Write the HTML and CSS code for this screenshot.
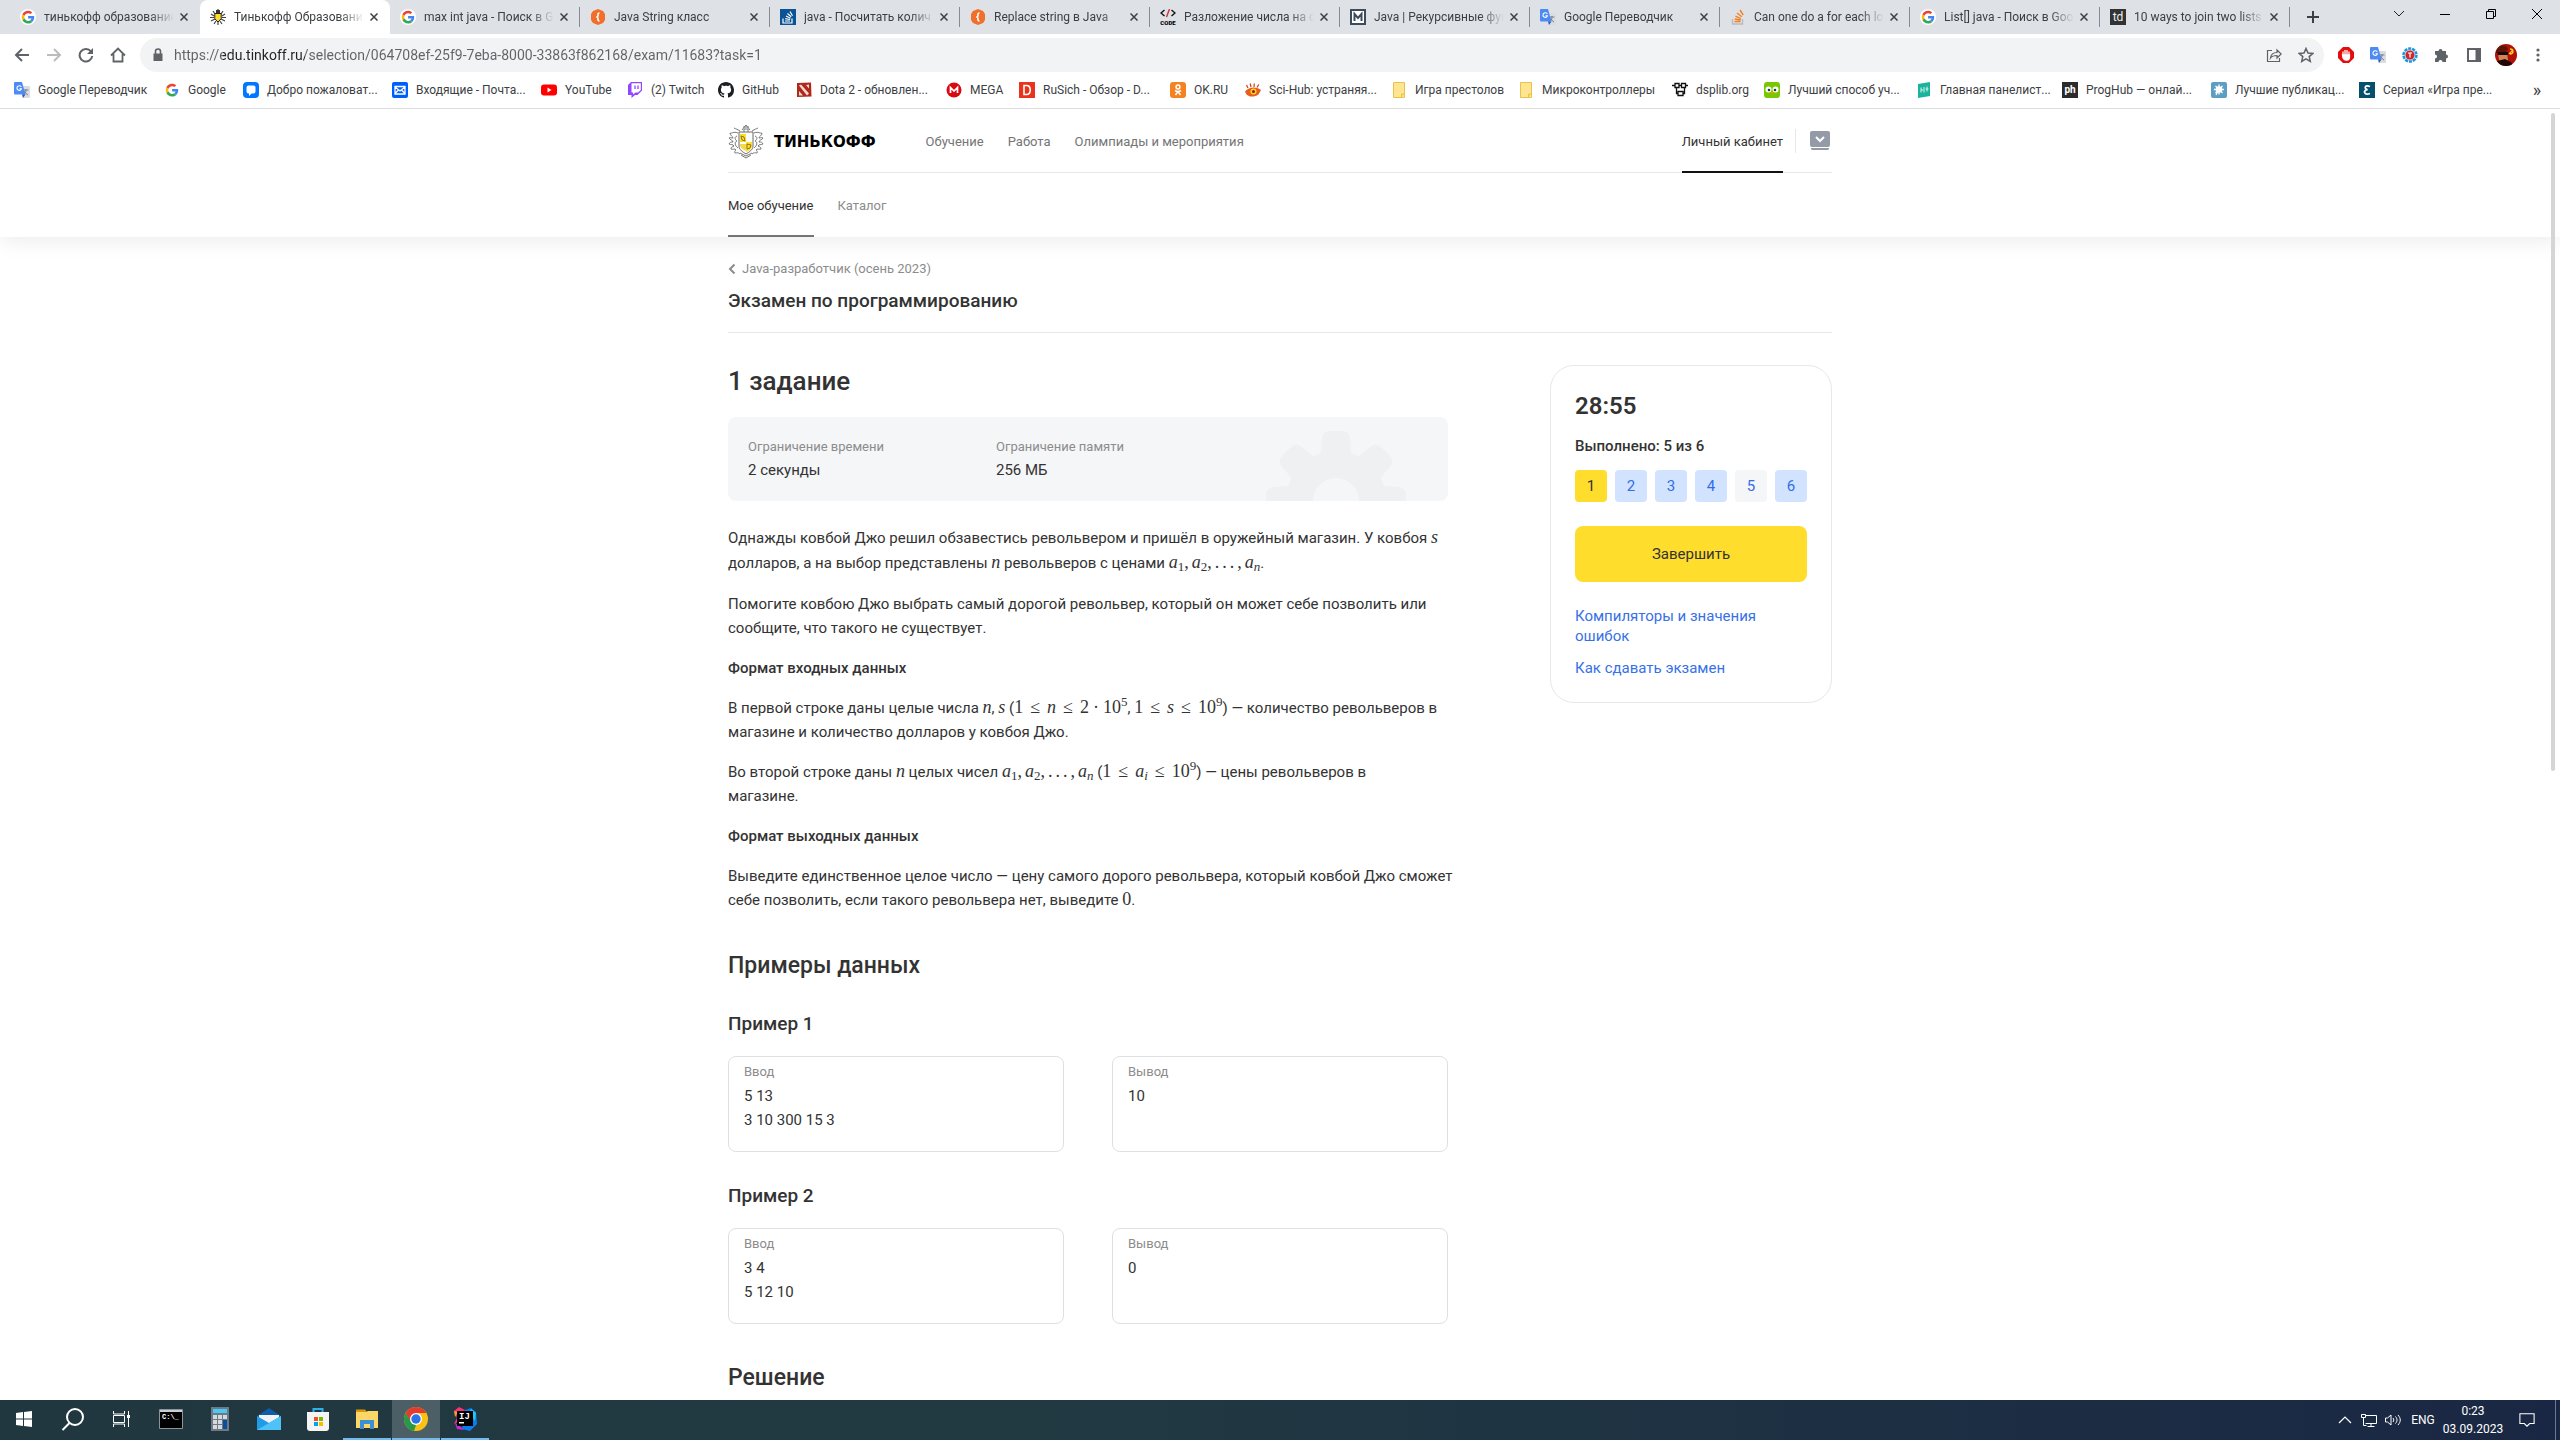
FILE: index.html
```html
<!DOCTYPE html>
<html lang="ru">
<head>
<meta charset="utf-8">
<title>Тинькофф Образование</title>
<link rel="stylesheet" href="styles.css">
</head>
<body>
<svg class="sprite" aria-hidden="true">
  <symbol id="google" viewBox="0 0 16 16">
    <circle cx="8" cy="8" r="8" fill="#fff"/>
    <path d="M14.2 8.2c0-.5 0-.9-.1-1.3H8.1v2.5h3.4c-.2.8-.6 1.5-1.3 1.9l2 1.6c1.2-1.1 2-2.7 2-4.7z" fill="#4285f4"/>
    <path d="M8.1 14.4c1.7 0 3.1-.5 4.1-1.5l-2-1.6c-.5.4-1.300.6-2.1.6-1.700 0-3.100-1.100-3.600-2.600l-2.100 1.600c1 2.100 3.200 3.500 5.700 3.500z" fill="#34a853"/>
    <path d="M4.500 9.300c-.3-.8-.3-1.700 0-2.500L2.400 5.200c-.9 1.800-.9 3.900 0 5.700z" fill="#fbbc05"/>
    <path d="M8.100 4.200c.9 0 1.800.3 2.400.9l1.800-1.800C11.200 2.300 9.700 1.700 8.100 1.700c-2.500 0-4.700 1.400-5.700 3.500l2.100 1.600c.5-1.500 1.900-2.600 3.600-2.600z" fill="#ea4335"/>
  </symbol>
  <symbol id="tinkoff" viewBox="0 0 16 16">
    <path d="M8 0v16M3 2l2 3M13 2l-2 3M1 5l3 2M15 5l-3 2M0 8.500h4M16 8.500h-4M1 12l4-2M15 12l-4-2M4 15l2-3M12 15l-2-3" stroke="#444" stroke-width="1.200"/>
    <path d="M4.800 4.500h6.400v5.200L8 13l-3.200-3.300z" fill="#ffdd2d" stroke="#222"/>
    <path d="M6 1h4v3H6z" fill="#333"/>
  </symbol>
  <symbol id="hexa" viewBox="0 0 16 16">
    <path d="M8 0l5 2 2 3v6l-2 3-5 2-5-2-2-3V5l2-3z" fill="#f26e2b"/>
    <path d="M9.500 4C7.500 4 8 6 8 7L7 8l1 1c0 1-.5 3 1.500 3" fill="none" stroke="#fff" stroke-width="1.600"/>
  </symbol>
  <symbol id="so-ru" viewBox="0 0 16 16">
    <path d="M0 0h16v16H0z" fill="#0b5394"/>
    <path d="M3 9.500v4.500h9V9.500M5 12h5M5.300 9.700l4.800.8M6 7l4.500 2.200M7.500 4.500l3.700 3.200M10 2.500l2.500 4.200" fill="none" stroke="#fff" stroke-width="1.200"/>
  </symbol>
  <symbol id="so" viewBox="0 0 16 16">
    <path d="M2.500 10v5h10v-5" fill="none" stroke="#bcbbbb" stroke-width="1.400"/>
    <path d="M4.500 12.500h6M4.700 10l5.900 1M5.400 7.200l5.500 2.400M7 4l4.800 3.800M10 1l3.200 5" fill="none" stroke="#f48024" stroke-width="1.400"/>
  </symbol>
  <symbol id="code" viewBox="0 0 16 16">
    <path d="M4.500 1L1 4l3.500 3M11.500 1L15 4l-3.500 3" fill="none" stroke="#111" stroke-width="1.400"/>
    <path d="M9.500 0l-3 8" stroke="#d32f2f" stroke-width="1.400"/>
    <text x="8" y="16" font-family="Roboto" font-size="6" font-weight="900" text-anchor="middle">CODE</text>
  </symbol>
  <symbol id="mbox" viewBox="0 0 16 16">
    <path d="M1 1h14v14H1z" fill="#fff" stroke="#3d4b5c" stroke-width="2"/>
    <path d="M4.500 12V5L8 9l3.500-4v7" fill="none" stroke="#3d4b5c" stroke-width="2"/>
  </symbol>
  <symbol id="translate" viewBox="0 0 16 16">
    <path d="M7 4h8a1 1 0 011 1v10a1 1 0 01-1 1H9z" fill="#dcdcdc"/>
    <path d="M9.500 8h5M12 7v1c0 2-1 4-2.500 5M10.500 9c.7 2 2 3 3.500 4" fill="none" stroke="#71809c"/>
    <path d="M1 0h7l3.500 12.500H1a1 1 0 01-1-1V1a1 1 0 011-1z" fill="#4c8bf5"/>
    <path d="M8 12.500h3.500L9 16z" fill="#2a56c6"/>
    <path d="M7.300 5A2.300 2.300 0 107.500 6.700H5.500" fill="none" stroke="#fff" stroke-width="1.100"/>
  </symbol>
  <symbol id="td" viewBox="0 0 16 16"><path d="M0 0h16v16H0z" fill="#333"/><text x="8" y="12" font-family="Roboto" font-size="12" fill="#eee" text-anchor="middle">td</text></symbol>
  <symbol id="chat" viewBox="0 0 16 16"><rect width="16" height="16" rx="4" fill="#07f"/><path d="M5.500 3.500h5a2 2 0 012 2v4a2 2 0 01-2 2H8.500L6 14v-2.500h-.5a2 2 0 01-2-2v-4a2 2 0 012-2z" fill="#fff"/></symbol>
  <symbol id="mail" viewBox="0 0 16 16"><rect width="16" height="16" rx="2" fill="#005ff9"/><path d="M3 4.500h10v7.500H3zM3 5l5 4 5-4M3 11.500l3.500-3.500M13 11.500L9.500 8" fill="none" stroke="#fff" stroke-width="1.300"/></symbol>
  <symbol id="youtube" viewBox="0 0 16 16"><rect y="2.500" width="16" height="11" rx="3" fill="#f00"/><path d="M6.500 5.500v5l4-2.500z" fill="#fff"/></symbol>
  <symbol id="twitch" viewBox="0 0 16 16"><path d="M4 0L1 3v10h3.500v3L8 13h2.500L15 8.500V0z" fill="#9146ff"/><path d="M4.500 1.200h9.300V8L11 10.500H8.500L6 12.500v-2H4.500z" fill="#fff"/><path d="M8 3.500V7M11 3.500V7" stroke="#9146ff" stroke-width="1.300"/></symbol>
  <symbol id="github" viewBox="0 0 16 16"><path d="M8 0C3.580 0 0 3.580 0 8c0 3.540 2.290 6.530 5.470 7.590.4.070.55-.17.55-.38 0-.19-.01-.82-.01-1.490-2.010.37-2.530-.49-2.690-.94-.09-.23-.48-.94-.82-1.130-.28-.15-.68-.52-.01-.53.630-.01 1.080.58 1.230.82.720 1.210 1.870.87 2.330.66.070-.52.280-.87.510-1.070-1.780-.2-3.640-.89-3.640-3.950 0-.87.310-1.590.820-2.150-.08-.2-.36-1.020.08-2.120 0 0 .67-.21 2.200.82.640-.18 1.320-.27 2-.27s1.360.09 2 .27c1.530-1.040 2.200-.82 2.200-.82.440 1.100.160 1.920.080 2.120.510.560.820 1.270.820 2.150 0 3.070-1.870 3.750-3.650 3.950.290.250.540.730.540 1.480 0 1.070-.01 1.930-.01 2.200 0 .210.150.460.550.380A8.010 8.010 0 0016 8c0-4.420-3.580-8-8-8z" fill="#1b1f23"/></symbol>
  <symbol id="dota" viewBox="0 0 16 16"><path d="M1 1l14-.5.5 14L1 15z" fill="#b0281c"/><path d="M3 3.500l2-1 8 9-2 2zM10 3l3-.5v4zM3 9l4 4.500H3z" fill="#f3dad4"/></symbol>
  <symbol id="mega" viewBox="0 0 16 16"><circle cx="8" cy="8" r="7.500" fill="#d9090f"/><path d="M4.500 11V5.500L8 9l3.500-3.500V11" fill="none" stroke="#fff" stroke-width="1.700"/></symbol>
  <symbol id="dred" viewBox="0 0 16 16"><path d="M0 0h16v16H0z" fill="#e9341d"/><path d="M5 3.500h2.500c5 0 5 9 0 9H5z" fill="none" stroke="#fff" stroke-width="1.600"/></symbol>
  <symbol id="ok" viewBox="0 0 16 16"><rect width="16" height="16" rx="3" fill="#f58220"/><circle cx="8" cy="5" r="1.900" fill="none" stroke="#fff" stroke-width="1.500"/><path d="M5 8.500c2 1.300 4 1.300 6 0M8 9.500L5.500 13M8 9.500l2.500 3.500" fill="none" stroke="#fff" stroke-width="1.500"/></symbol>
  <symbol id="scihub" viewBox="0 0 16 16"><path d="M3 6L1.500 3M6 5L5.200 1.500M9 5l.3-3.500M12 5.500l1.800-3" stroke="#d8431f" stroke-width="1.300"/><path d="M0 9.500C4 4.500 12 4.500 16 8l-2.500 4.500C9 15.500 4 15 1.500 12.500z" fill="#e85c1c"/><circle cx="8.500" cy="9.500" r="3" fill="#ffd42a"/><circle cx="8.500" cy="9.500" r="1.500" fill="#8c1c0c"/></symbol>
  <symbol id="folder" viewBox="0 0 16 16"><path d="M2.500.5h11v15h-11z" fill="#ffe58f" stroke="#e8c24a"/><path d="M10.500 15.500v-3.500h3" fill="#ffd96a" stroke="#e8c24a"/></symbol>
  <symbol id="dsp" viewBox="0 0 16 16"><path d="M3 1.500h4v4H3zM9.500 1.500h4v4h-4zM6 9.500h5v4H6zM0 3.500h3M7 3.500h2.500M13.500 3.500H16M4.500 5.500v6H6M12.500 5.500v6H11" fill="none" stroke="#111" stroke-width="1.300"/></symbol>
  <symbol id="duo" viewBox="0 0 16 16"><rect width="16" height="16" rx="3" fill="#78c800"/><circle cx="4.500" cy="7.500" r="3" fill="#fff"/><circle cx="11.500" cy="7.500" r="3" fill="#fff"/><circle cx="5" cy="8" r="1.300" fill="#333"/><circle cx="11" cy="8" r="1.300" fill="#333"/><path d="M6.500 10h3L8 12.500z" fill="#ff9600"/></symbol>
  <symbol id="panel" viewBox="0 0 16 16"><path d="M2 2l12-2v14L2 16z" fill="#1bb39b"/><path d="M5 5.500v5M5 8h2M8 5v5.500M11 4.500v5M9.500 7h3" stroke="#d6f5ef"/></symbol>
  <symbol id="ph" viewBox="0 0 16 16"><path d="M0 0h16v16H0z" fill="#2b2b2b"/><text x="8" y="11" font-family="Roboto" font-size="10" font-weight="700" fill="#fff" text-anchor="middle">ph</text></symbol>
  <symbol id="pub" viewBox="0 0 16 16"><rect width="16" height="16" rx="2" fill="#5c9ec4"/><circle cx="8" cy="7.500" r="3.300" fill="#fff"/><path d="M8 2.500v10M3 7.500h10M4.500 4l7 7M11.500 4l-7 7M5 13l1.500-3" stroke="#fff" stroke-width="1.300"/></symbol>
  <symbol id="serial" viewBox="0 0 16 16"><path d="M0 0h16v16H0z" fill="#06506e"/><path d="M11 4.500C6 2.500 4.500 6.500 8.500 7.700 3.500 8.500 5 13.500 11 11.500" fill="none" stroke="#fff" stroke-width="1.700"/></symbol>
  <symbol id="x" viewBox="0 0 8 8"><path d="M.5.5l7 7M7.500.5l-7 7" fill="none" stroke="#3c4043" stroke-width="1.500"/></symbol>
</svg>

<header class="browser">
  <div class="tabstrip">
    <div class="tab"><svg class="fav"><use href="#google"/></svg><span class="tab-title">тинькофф образование</span><button class="tab-x" aria-label="Закрыть"><svg><use href="#x"/></svg></button></div>
    <div class="tab active"><svg class="fav"><use href="#tinkoff"/></svg><span class="tab-title">Тинькофф Образовани</span><button class="tab-x" aria-label="Закрыть"><svg><use href="#x"/></svg></button></div>
    <div class="tab sep"><svg class="fav"><use href="#google"/></svg><span class="tab-title">max int java - Поиск в G</span><button class="tab-x" aria-label="Закрыть"><svg><use href="#x"/></svg></button></div>
    <div class="tab sep"><svg class="fav"><use href="#hexa"/></svg><span class="tab-title">Java String класс</span><button class="tab-x" aria-label="Закрыть"><svg><use href="#x"/></svg></button></div>
    <div class="tab sep"><svg class="fav"><use href="#so-ru"/></svg><span class="tab-title">java - Посчитать колич</span><button class="tab-x" aria-label="Закрыть"><svg><use href="#x"/></svg></button></div>
    <div class="tab sep"><svg class="fav"><use href="#hexa"/></svg><span class="tab-title">Replace string в Java</span><button class="tab-x" aria-label="Закрыть"><svg><use href="#x"/></svg></button></div>
    <div class="tab sep"><svg class="fav"><use href="#code"/></svg><span class="tab-title">Разложение числа на с</span><button class="tab-x" aria-label="Закрыть"><svg><use href="#x"/></svg></button></div>
    <div class="tab sep"><svg class="fav"><use href="#mbox"/></svg><span class="tab-title">Java | Рекурсивные фун</span><button class="tab-x" aria-label="Закрыть"><svg><use href="#x"/></svg></button></div>
    <div class="tab sep"><svg class="fav"><use href="#translate"/></svg><span class="tab-title">Google Переводчик</span><button class="tab-x" aria-label="Закрыть"><svg><use href="#x"/></svg></button></div>
    <div class="tab sep"><svg class="fav"><use href="#so"/></svg><span class="tab-title">Can one do a for each lo</span><button class="tab-x" aria-label="Закрыть"><svg><use href="#x"/></svg></button></div>
    <div class="tab sep"><svg class="fav"><use href="#google"/></svg><span class="tab-title">List[] java - Поиск в Goo</span><button class="tab-x" aria-label="Закрыть"><svg><use href="#x"/></svg></button></div>
    <div class="tab sep"><svg class="fav"><use href="#td"/></svg><span class="tab-title">10 ways to join two lists</span><button class="tab-x" aria-label="Закрыть"><svg><use href="#x"/></svg></button></div>
    <button class="new-tab" aria-label="Новая вкладка"><svg viewBox="0 0 12 12"><path d="M6 0v12M0 6h12" stroke="#3c4043" stroke-width="2"/></svg></button>
    <div class="window-controls">
      <button aria-label="Поиск вкладок"><svg viewBox="0 0 12 12"><path d="M1 3l5 5 5-5" fill="none" stroke="#222"/></svg></button>
      <button aria-label="Свернуть"><svg viewBox="0 0 12 12"><path d="M1 6.500h10" stroke="#000"/></svg></button>
      <button aria-label="Развернуть"><svg viewBox="0 0 12 12"><path d="M1.500 3.500h7v7h-7zM3.500 3.500v-2h7v7h-2" fill="none" stroke="#000"/></svg></button>
      <button aria-label="Закрыть окно"><svg viewBox="0 0 12 12"><path d="M1 1l10 10M11 1L1 11" stroke="#000"/></svg></button>
    </div>
  </div>
  <div class="toolbar">
    <button aria-label="Назад"><svg viewBox="0 0 16 16"><path d="M15 8H2M8 2L2 8l6 6" fill="none" stroke="#5f6368" stroke-width="2"/></svg></button>
    <button aria-label="Вперёд"><svg viewBox="0 0 16 16"><path d="M1 8h13M8 2l6 6-6 6" fill="none" stroke="#babcbe" stroke-width="2"/></svg></button>
    <button aria-label="Обновить"><svg viewBox="0 0 16 16"><path d="M13 4.500A6.300 6.300 0 1014.200 9" fill="none" stroke="#5f6368" stroke-width="2"/><path d="M15 1v6H9z" fill="#5f6368"/></svg></button>
    <button aria-label="Домой"><svg viewBox="0 0 16 16"><path d="M3.500 7v7.500h9V7M1 8.500l7-7 7 7" fill="none" stroke="#5f6368" stroke-width="1.800"/></svg></button>
    <div class="omnibox">
      <svg class="lock" viewBox="0 0 12 14"><path d="M1.500 5.500h9V13h-9z" fill="#5f6368"/><path d="M3.500 6V3.500a2.500 2.500 0 015 0V6" fill="none" stroke="#5f6368" stroke-width="1.600"/></svg>
      <input class="url" type="text" aria-label="Адрес" value="https://edu.tinkoff.ru/selection/064708ef-25f9-7eba-8000-33863f862168/exam/11683?task=1">
      <button aria-label="Поделиться"><svg viewBox="0 0 16 16"><path d="M6 3.500H1.500v11h12V11M4.500 11C5 7 8 5.500 11 5.500V3l4.200 4L11 11V8.500c-3 0-5 .5-6.500 2.500z" fill="none" stroke="#5f6368" stroke-width="1.200"/></svg></button>
      <button aria-label="В закладки"><svg viewBox="0 0 16 16"><path d="M8 1.500l2 4.500 4.900.4-3.700 3.200 1.100 4.800L8 11.900l-4.300 2.500 1.100-4.800L1.100 6.400 6 6z" fill="none" stroke="#5f6368" stroke-width="1.500"/></svg></button>
    </div>
    <div class="extensions">
      <button aria-label="AdBlock"><svg viewBox="0 0 16 16"><path d="M5 0h6l5 5v6l-5 5H5l-5-5V5z" fill="#e40d0d"/><path d="M5 8V4.500M7 8V3M9 8V3M11 9V4.500M4.500 8h7v2c0 4-5 4-6.500 1z" fill="#fff" stroke="#fff" stroke-width="1.300"/></svg></button>
      <button aria-label="Переводчик"><svg><use href="#translate"/></svg></button>
      <button aria-label="Расширение"><svg viewBox="0 0 16 16"><circle cx="8" cy="8" r="6.500" fill="#bfe3f5" stroke="#2196d6" stroke-width="2.500" stroke-dasharray="3 1"/><circle cx="8" cy="8" r="4.500" fill="#d5232b"/><path d="M6 6h4M8 6v4.500" stroke="#fff" stroke-width="1.200"/></svg></button>
      <button aria-label="Расширения"><svg viewBox="0 0 16 16"><path d="M1 4h3.500a2 2 0 114 0H12v3.500a2 2 0 110 4V15H8.500a2 2 0 10-4 0H1v-3.500a2 2 0 100-4z" fill="#5f6368"/></svg></button>
      <button aria-label="Боковая панель"><svg viewBox="0 0 16 16"><path d="M2 2h12v12H2z" fill="none" stroke="#5f6368" stroke-width="2"/><path d="M9.500 2H14v12H9.500z" fill="#5f6368"/></svg></button>
      <button class="avatar" aria-label="Профиль"><svg viewBox="0 0 22 22"><clipPath id="face"><circle cx="11" cy="11" r="11"/></clipPath><g clip-path="url(#face)"><path d="M0 0h22v22H0z" fill="#b01208"/><path d="M1 7C4 0 11 0 13 5l-3 4H1z" fill="#5a160a"/><path d="M3 9l9-1 1 8-4 4-5-4z" fill="#d0865a"/><path d="M2 8h11v3H3zM2 17l8-2 7 4v3H2z" fill="#220805"/><path d="M15 5c4 0 4 5 0 5M14 10l4-4" fill="none" stroke="#ffc928" stroke-width="1.300"/></g></svg></button>
      <button aria-label="Меню"><svg viewBox="0 0 16 16"><g fill="#5f6368"><circle cx="8" cy="3" r="1.600"/><circle cx="8" cy="8" r="1.600"/><circle cx="8" cy="13" r="1.600"/></g></svg></button>
    </div>
  </div>
  <nav class="bookmarks" aria-label="Закладки">
    <a href="#"><svg><use href="#translate"/></svg>Google Переводчик</a>
    <a href="#"><svg><use href="#google"/></svg>Google</a>
    <a href="#"><svg><use href="#chat"/></svg>Добро пожаловат...</a>
    <a href="#"><svg><use href="#mail"/></svg>Входящие - Почта...</a>
    <a href="#"><svg><use href="#youtube"/></svg>YouTube</a>
    <a href="#"><svg><use href="#twitch"/></svg>(2) Twitch</a>
    <a href="#"><svg><use href="#github"/></svg>GitHub</a>
    <a href="#"><svg><use href="#dota"/></svg>Dota 2 - обновлен...</a>
    <a href="#"><svg><use href="#mega"/></svg>MEGA</a>
    <a href="#"><svg><use href="#dred"/></svg>RuSich - Обзор - D...</a>
    <a href="#"><svg><use href="#ok"/></svg>OK.RU</a>
    <a href="#"><svg><use href="#scihub"/></svg>Sci-Hub: устраняя...</a>
    <a href="#"><svg><use href="#folder"/></svg>Игра престолов</a>
    <a href="#"><svg><use href="#folder"/></svg>Микроконтроллеры</a>
    <a href="#"><svg><use href="#dsp"/></svg>dsplib.org</a>
    <a href="#"><svg><use href="#duo"/></svg>Лучший способ уч...</a>
    <a href="#"><svg><use href="#panel"/></svg>Главная панелист...</a>
    <a href="#"><svg><use href="#ph"/></svg>ProgHub — онлай...</a>
    <a href="#"><svg><use href="#pub"/></svg>Лучшие публикац...</a>
    <a href="#"><svg><use href="#serial"/></svg>Сериал «Игра пре...</a>
    <button class="more" aria-label="Другие закладки">»</button>
  </nav>
</header>

<div class="viewport">
  <div class="scroll-thumb"></div>
  <header class="site-header">
    <div class="container">
      <div class="header-row">
        <a class="logo" href="#">
          <svg viewBox="0 0 36 36" aria-hidden="true">
            <path d="M11 8h14v14c0 4-4 6-7 8-3-2-7-4-7-8z" fill="#fff" stroke="#666"/>
            <path d="M12 10h6v8h-6zM18 18h6v4c0 3-3 5-6 6z" fill="#ffdd2d"/>
            <path d="M12 20h6v7c-3-2-6-3-6-6z" fill="#f5d94a"/>
            <g fill="none" stroke="#777">
              <path d="M13 12l3 1 1 4-3-1zM19 20l4 1-1 3-3 1z" stroke="#8a7a1c"/>
              <path d="M14 6l4-5 4 5M15 3h6M16 8V5h4v3M13 31l5 3 5-3M12 29l6 3 6-3"/>
              <path d="M10 9C5 7 4 10 2 9c0 3 3 3 3 5-2 0-3-1-4 0 1 2 4 2 4 4-2 0-3 0-4 2 2 1 4 0 5 2-2 1-3 1-3 3 2 1 4-1 5 1-1 1-2 2-1 3 2 0 3-1 5 1"/>
              <path d="M26 9c5-2 6 1 8 0 0 3-3 3-3 5 2 0 3-1 4 0-1 2-4 2-4 4 2 0 3 0 4 2-2 1-4 0-5 2 2 1 3 1 3 3-2 1-4-1-5 1 1 1 2 2 1 3-2 0-3-1-5 1"/>
              <path d="M9 12c-3 1-2 4 0 5-3 1-2 5 1 7M27 12c3 1 2 4 0 5 3 1 2 5-1 7M12 7C9 5 8 5 6 4M24 7c3-2 4-2 6-3"/>
            </g>
          </svg>
          <span>ТИНЬКОФФ</span>
        </a>
        <nav class="main-nav">
          <a href="#">Обучение</a>
          <a href="#">Работа</a>
          <a href="#">Олимпиады и мероприятия</a>
        </nav>
        <a class="account" href="#">Личный кабинет</a>
        <button class="profile" aria-label="Профиль"><svg viewBox="0 0 20 20"><rect width="20" height="16" rx="2" fill="#959ba6"/><path d="M1 17h18c0 2-1 2-2 2H3c-1 0-2 0-2-2z" fill="#959ba6"/><path d="M6 6l4 4 4-4" fill="none" stroke="#fff" stroke-width="2"/></svg></button>
      </div>
      <nav class="sub-nav">
        <a class="current" href="#">Мое обучение</a>
        <a href="#">Каталог</a>
      </nav>
    </div>
  </header>

  <div class="container">
    <div class="page-head">
      <a class="back" href="#"><svg viewBox="0 0 8 12"><path d="M6.500 1.500L2 6l4.500 4.500" fill="none" stroke="#8c8c8c" stroke-width="2"/></svg>Java-разработчик (осень 2023)</a>
      <h1>Экзамен по программированию</h1>
    </div>
    <div class="columns">
      <main class="task">
        <h2 class="task-title">1 задание</h2>
        <dl class="limits">
          <div><dt>Ограничение времени</dt><dd>2 секунды</dd></div>
          <div><dt>Ограничение памяти</dt><dd>256 МБ</dd></div>
          <svg class="gear" viewBox="0 0 140 70" aria-hidden="true">
            <g fill="#eff0f2">
              <circle cx="70" cy="70" r="50"/>
              <path id="tooth" d="M50 30C56 24 55 18 56 8q1-8 8-8h12q7 0 8 8c1 10 0 16 6 22z"/>
              <use href="#tooth" transform="rotate(45 70 70)"/>
              <use href="#tooth" transform="rotate(-45 70 70)"/>
              <use href="#tooth" transform="rotate(90 70 70)"/>
              <use href="#tooth" transform="rotate(-90 70 70)"/>
            </g>
            <circle cx="70" cy="70" r="23" fill="#f5f6f8"/>
          </svg>
        </dl>
        <div class="statement">
          <p>Однажды ковбой Джо решил обзавестись револьвером и пришёл в оружейный магазин. У ковбоя <i>s</i><br>
          долларов, а на выбор представлены <i>n</i> револьверов с ценами <i>a</i><sub>1</sub><b>,</b><i>a</i><sub>2</sub><b>,</b><b>.</b><b>.</b><b>.</b><b>,</b><i>a</i><sub><i>n</i></sub>.</p>
          <p>Помогите ковбою Джо выбрать самый дорогой револьвер, который он может себе позволить или<br>сообщите, что такого не существует.</p>
          <h3>Формат входных данных</h3>
          <p>В первой строке даны целые числа <i>n</i>, <i>s</i> (<var>1<b class="rel">≤</b><i>n</i><b class="rel">≤</b>2<b class="op">·</b>10<sup>5</sup></var>, <var>1<b class="rel">≤</b><i>s</i><b class="rel">≤</b>10<sup>9</sup></var>) — количество револьверов в<br>магазине и количество долларов у ковбоя Джо.</p>
          <p>Во второй строке даны <i>n</i> целых чисел <i>a</i><sub>1</sub><b>,</b><i>a</i><sub>2</sub><b>,</b><b>.</b><b>.</b><b>.</b><b>,</b><i>a</i><sub><i>n</i></sub> (<var>1<b class="rel">≤</b><i>a</i><sub><i>i</i></sub><b class="rel">≤</b>10<sup>9</sup></var>) — цены револьверов в<br>магазине.</p>
          <h3>Формат выходных данных</h3>
          <p>Выведите единственное целое число — цену самого дорого револьвера, который ковбой Джо сможет<br>себе позволить, если такого револьвера нет, выведите <var>0</var>.</p>
        </div>
        <h2 class="section-title">Примеры данных</h2>
        <section class="example">
          <h3>Пример 1</h3>
          <div class="io">
            <div class="box"><span>Ввод</span><pre>5 13
3 10 300 15 3</pre></div>
            <div class="box"><span>Вывод</span><pre>10</pre></div>
          </div>
        </section>
        <section class="example">
          <h3>Пример 2</h3>
          <div class="io">
            <div class="box"><span>Ввод</span><pre>3 4
5 12 10</pre></div>
            <div class="box"><span>Вывод</span><pre>0</pre></div>
          </div>
        </section>
        <h2 class="section-title">Решение</h2>
      </main>
      <aside class="card">
        <div class="timer">28:55</div>
        <div class="done">Выполнено: 5 из 6</div>
        <div class="numbers">
          <button class="now">1</button><button>2</button><button>3</button><button>4</button><button class="todo">5</button><button>6</button>
        </div>
        <button class="finish">Завершить</button>
        <a href="#">Компиляторы и значения ошибок</a>
        <a href="#">Как сдавать экзамен</a>
      </aside>
    </div>
  </div>
</div>

<footer class="taskbar">
  <button aria-label="Пуск"><svg viewBox="0 0 24 24"><path d="M4 6l7-1v6.500H4zM12 4.900L20 4v7.500h-8zM4 12.500h7V19l-7-1zM12 12.500h8V20l-8-.9z" fill="#fff"/></svg></button>
  <button aria-label="Поиск"><svg viewBox="0 0 24 24"><circle cx="14" cy="10" r="8" fill="none" stroke="#fff" stroke-width="2"/><path d="M8.500 16L1.500 23" stroke="#fff" stroke-width="2"/></svg></button>
  <button aria-label="Представление задач"><svg viewBox="0 0 24 24"><path d="M3.500 4v3h11V4M3.500 8.500h11v7h-11zM3.500 20v-3h11v3M18.500 4v16" fill="none" stroke="#fff"/><path d="M17 8h3v3h-3z" fill="#fff"/></svg></button>
  <button aria-label="Командная строка"><svg viewBox="0 0 24 24"><path d="M.5 2.500h23v19H.5z" fill="#000" stroke="#8d9499"/><path d="M1 3h22v2H1z" fill="#c8ced3"/><text x="3" y="12" font-family="Liberation Mono" font-size="7" font-weight="700" fill="#fff">C:\_</text></svg></button>
  <button aria-label="Калькулятор"><svg viewBox="0 0 24 24"><path d="M3 0h18v24H3z" fill="#6d7a83"/><path d="M5 2h14v4H5z" fill="#4cc8f5"/><path d="M5 8h4v4H5zM10 8h4v4h-4zM15 8h4v4h-4zM5 13h4v4H5zM10 13h4v4h-4zM5 18h4v4H5zM10 18h4v4h-4z" fill="#d5dade"/><path d="M15 13h4v9h-4z" fill="#0f4c99"/></svg></button>
  <button aria-label="Почта"><svg viewBox="0 0 24 24"><path d="M0 9l12-8 12 8v4H0z" fill="#0f5cab"/><path d="M2 8h20v8H2z" fill="#f2f2f2"/><path d="M0 9l12 7 12-7v14H0z" fill="#1f9be8"/><path d="M0 23l24-14v14z" fill="#4fc3f7"/></svg></button>
  <button aria-label="Магазин"><svg viewBox="0 0 24 24"><path d="M7.500 6V2h9v4" fill="none" stroke="#2fb0ea" stroke-width="2"/><path d="M1 5h22v16q0 3-3 3H4q-3 0-3-3z" fill="#f4f4f4"/><path d="M8 10h4v4H8z" fill="#f25022"/><path d="M13 10h4v4h-4z" fill="#7fba00"/><path d="M8 15h4v4H8z" fill="#00a4ef"/><path d="M13 15h4v4h-4z" fill="#ffb900"/></svg></button>
  <button class="running" aria-label="Проводник"><svg viewBox="0 0 24 24"><path d="M1 4V2.500h9L12 5H1z" fill="#d9980e"/><path d="M1 5l10 0 2-1h10v17H1z" fill="#fcd667"/><path d="M5 22v-9h14v9h-4v-5H9v5z" fill="#3c8fd4"/></svg></button>
  <button class="running focused" aria-label="Chrome"><svg viewBox="0 0 24 24"><circle cx="12" cy="12" r="12" fill="#fbc116"/><path d="M12 6h10.400a12 12 0 00-20.800 0L6 14z" fill="#e33b2e"/><path d="M1.600 6L7 15l5 3-2 5.900A12 12 0 011.600 6z" fill="#269a48"/><circle cx="12" cy="12" r="6" fill="#fff"/><circle cx="12" cy="12" r="4.700" fill="#2a74e8"/></svg></button>
  <button class="running" aria-label="IntelliJ IDEA"><svg viewBox="0 0 24 24"><path d="M1 4l5-4 6 3-3 10-8 4 3-6z" fill="#fe2f75"/><path d="M1 4l4 1-3 5z" fill="#fc9b2d"/><path d="M12 3l6-2 5 4 1 12-7 7-8-2z" fill="#0a7cf0"/><path d="M18 2l5 4-1 8-6-8z" fill="#21c7f0"/><path d="M2 16l6 4 3 3-7-1z" fill="#c729d8"/><path d="M4 4h16v15H4z" fill="#000"/><text x="6" y="12" font-family="Liberation Mono" font-size="9" font-weight="700" fill="#fff">IJ</text><path d="M6 15h5v1.500H6z" fill="#fff"/></svg></button>
  <div class="tray">
    <button aria-label="Скрытые значки"><svg viewBox="0 0 16 16"><path d="M2 11l6-6 6 6" fill="none" stroke="#fff" stroke-width="1.200"/></svg></button>
    <button aria-label="Сеть"><svg viewBox="0 0 16 16"><path d="M5 3.500h10.500v8H4.500M10 11.500v3M6.500 14.500h7M.5 2.500h4v3h-4zM2.500 5.500v8h3" fill="none" stroke="#fff"/></svg></button>
    <button aria-label="Громкость"><svg viewBox="0 0 16 16"><path d="M.5 6h2L6 3v10l-3.500-3h-2zM8 6c1 1.500 1 2.500 0 4M10.500 4.500c2 2.500 2 4.500 0 7M13 3c3 3.500 3 6.500 0 10" fill="none" stroke="#fff"/></svg></button>
    <button class="lang">ENG</button>
    <div class="clock"><time>0:23</time><time>03.09.2023</time></div>
    <button aria-label="Уведомления"><svg viewBox="0 0 18 18"><path d="M1 2h16v11h-5l-3 3-3-3H1z" fill="none" stroke="#fff" stroke-width="1.200"/></svg></button>
  </div>
</footer>
</body>
</html>
```
FILE: styles.css
```css
* { box-sizing: border-box; }
body {
  margin: 0;
  height: 100vh;
  display: flex;
  flex-direction: column;
  background: #fff;
  color: #333;
  font: 15px/24px Roboto, "Liberation Sans", sans-serif;
}
a { color: inherit; text-decoration: none; }
button { border: 0; padding: 0; background: none; font: inherit; color: inherit; display: grid; place-items: center; }
h1, h2, h3, p, dl, dd, pre { margin: 0; }
.sprite { display: none; }

/* browser window */
.browser { flex: none; border-bottom: 1px solid #dadce0; font-size: 12px; color: #3c4043; }
.tabstrip { display: flex; height: 34px; padding-left: 10px; background: #dee1e6; }
.tab { position: relative; width: 190px; display: flex; align-items: center; padding: 0 6px 0 10px; }
.tab.active { background: #fff; border-radius: 8px 8px 0 0; }
.tab.sep::after { content: ""; position: absolute; right: 0; top: 7px; height: 20px; width: 1px; background: #878b91; }
.fav { width: 16px; height: 16px; margin-right: 8px; flex: none; }
.tab-title { flex: 1; overflow: hidden; white-space: nowrap; mask-image: linear-gradient(to right, #000 calc(100% - 24px), transparent); }
.tab-x { width: 20px; }
.tab-x svg { width: 8px; height: 8px; }
.new-tab { width: 46px; }
.new-tab svg { width: 12px; height: 12px; }
.window-controls { margin-left: auto; display: flex; }
.window-controls button { width: 46px; height: 28px; }
.window-controls svg { width: 12px; height: 12px; }

.toolbar { display: flex; align-items: center; height: 42px; padding: 0 6px; }
.toolbar button { width: 32px; height: 32px; }
.toolbar svg { width: 16px; height: 16px; }
.omnibox { flex: 1; display: flex; align-items: center; height: 34px; margin-left: 6px; padding: 0 2px 0 12px; border-radius: 17px; background: #f1f3f4; }
.toolbar .lock { width: 12px; height: 14px; }
.url {
  flex: 1;
  height: 34px;
  border: 0;
  padding: 0;
  margin-left: 10px;
  outline: 0;
  font: 14px Roboto, sans-serif;
  color: transparent;
  background: linear-gradient(to right, #5f6368 49px, #202124 49px 131px, #5f6368 131px);
  background-clip: text;
}
.extensions { display: flex; margin-left: 6px; }
.toolbar .avatar svg { width: 22px; height: 22px; }

.bookmarks {
  display: grid;
  grid-template-columns: 150px 79px 149px 149px 86px 91px 78px 150px 73px 151px 75px 146px 127px 154px 92px 152px 146px 149px 148px 1fr auto;
  align-items: center;
  height: 32px;
  padding: 0 14px 4px;
  white-space: nowrap;
}
.bookmarks a { display: flex; align-items: center; gap: 8px; }
.bookmarks svg { width: 16px; height: 16px; flex: none; }
.more { font-size: 18px; width: 18px; }

/* page area */
.viewport { position: relative; flex: 1; min-height: 0; overflow: hidden; }
.scroll-thumb { position: absolute; right: 5px; top: 4px; width: 4px; height: 51%; border-radius: 2px; background: #d5d5d5; }
.container { max-width: 1104px; margin: 0 auto; }
.site-header { box-shadow: 0 4px 20px rgba(0, 0, 0, .08); font-size: 13px; }
.header-row { display: flex; align-items: stretch; height: 64px; border-bottom: 1px solid #e7e8ea; color: #757575; }
.logo { display: flex; align-items: center; gap: 10px; padding-top: 2px; color: #000; font: 700 15px "DejaVu Sans", sans-serif; }
.logo svg { width: 36px; height: 36px; }
.main-nav { display: flex; align-items: center; gap: 24px; margin-left: 50px; padding-top: 2px; }
.account { margin: 0 12px -1px auto; padding-top: 4px; display: flex; align-items: center; border-bottom: 2px solid #111; color: #333; }
.profile { align-self: center; height: 24px; padding: 0 2px 0 14px; border-left: 1px solid #e7e8ea; }
.profile svg { width: 20px; height: 20px; }
.sub-nav { display: flex; gap: 24px; height: 64px; color: #8c8c8c; }
.sub-nav a { display: flex; align-items: center; padding-top: 4px; border-bottom: 2px solid transparent; }
.sub-nav .current { color: #333; border-color: #757575; }

.page-head { padding: 20px 0 19px; border-bottom: 1px solid #e7e8ea; }
.back { display: flex; align-items: center; gap: 6px; color: #8c8c8c; font-size: 13px; }
.back svg { width: 8px; height: 12px; }
h1 { margin-top: 8px; font-size: 19px; line-height: 24px; font-weight: 500; }

.columns { display: flex; justify-content: space-between; align-items: flex-start; padding-top: 32px; }
.task { width: 720px; }
h2 { font-weight: 500; line-height: 32px; }
.task-title { font-size: 26px; }
.limits { display: flex; height: 84px; margin: 20px 0 25px; padding: 19px 20px; border-radius: 8px; background: #f5f6f8; position: relative; }
.limits > div { width: 248px; }
dt { font-size: 13px; line-height: 22px; color: #8c8c8c; }
.gear { position: absolute; right: 42px; bottom: 0; width: 140px; height: 70px; }

.statement { white-space: nowrap; }
.statement p { margin-bottom: 16px; }
.statement p:first-child { line-height: 25px; }
.statement h3 { margin-bottom: 16px; font-size: 15px; font-weight: 500; }
.statement i, .statement var, .statement b, .statement sub, .statement sup { font-family: "Liberation Serif", serif; font-size: 18px; line-height: 1px; font-weight: 400; }
.statement var { font-style: normal; }
.statement sub, .statement sup { font-size: 13px; }
.statement sub { vertical-align: -3px; }
.statement sup { vertical-align: 7px; }
.statement sub i { font-size: 13px; }
.statement b { margin-right: 3px; }
.statement b.rel { margin: 0 7px; }
.statement b.op { margin: 0 4px; }

.section-title { margin-top: 38px; font-size: 23px; }
.example { margin-top: 30px; }
.example + .example { margin-top: 32px; }
.example h3 { font-size: 19px; line-height: 24px; font-weight: 500; }
.io { display: grid; grid-template-columns: 1fr 1fr; gap: 48px; margin-top: 20px; }
.box { min-height: 96px; padding: 3px 15px; border: 1px solid #dddfe0; border-radius: 8px; }
.box span { display: block; font-size: 13px; color: #8c8c8c; line-height: 24px; }
.box pre { font: inherit; }

.card { width: 282px; padding: 24px; border: 1px solid #e7e8ea; border-radius: 24px; }
.timer { font-size: 24px; line-height: 32px; font-weight: 600; }
.done { margin-top: 12px; font-weight: 500; }
.numbers { display: flex; gap: 8px; margin: 12px 0 24px; }
.numbers button { width: 32px; height: 32px; border-radius: 4px; background: #d2e3ff; color: #2f6ee8; }
.numbers .now { background: #ffdd2d; color: #333; }
.numbers .todo { background: #f5f6f8; }
.finish { width: 100%; height: 56px; margin-bottom: 24px; border-radius: 8px; background: #ffdd2d; }
.card a { display: block; margin-bottom: 12px; line-height: 20px; color: #3771e8; }
.card a:last-child { margin-bottom: 0; }

/* desktop taskbar */
.taskbar { flex: none; display: flex; height: 40px; background: linear-gradient(to right, #213740, #213a42 40%, #1a2744); color: #fff; font-size: 12px; }
.taskbar > button { width: 48px; border-bottom: 2px solid transparent; margin-right: 1px; }
.taskbar > button svg { width: 24px; height: 24px; }
.taskbar .running { border-color: #76b9ed; }
.taskbar .focused { background: #4d5f66; }
.tray { display: flex; align-items: center; margin-left: auto; padding-right: 16px; border-right: 1px solid #6b7890; margin-right: 4px; }
.tray button { width: 24px; height: 40px; }
.tray svg { width: 16px; height: 16px; }
.tray .lang { width: 36px; }
.clock { display: flex; flex-direction: column; width: 64px; text-align: center; line-height: 18px; margin-right: 10px; }
```
